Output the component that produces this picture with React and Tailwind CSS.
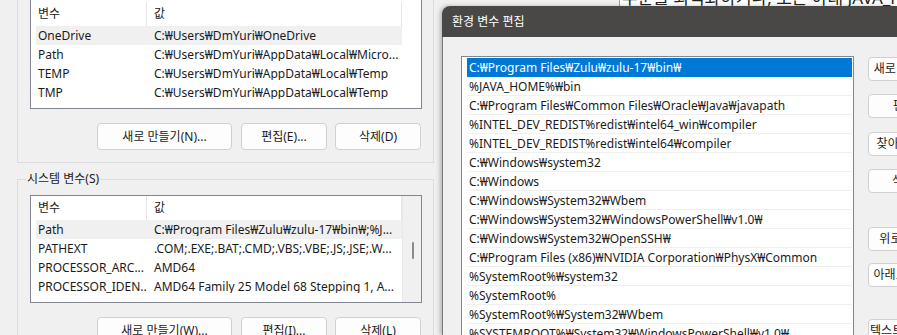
const userRows = [
  ['OneDrive', 'C:₩Users₩DmYuri₩OneDrive'],
  ['Path', 'C:₩Users₩DmYuri₩AppData₩Local₩Micro...'],
  ['TEMP', 'C:₩Users₩DmYuri₩AppData₩Local₩Temp'],
  ['TMP', 'C:₩Users₩DmYuri₩AppData₩Local₩Temp'],
];

const systemRows = [
  ['Path', 'C:₩Program Files₩Zulu₩zulu-17₩bin₩;%J...'],
  ['PATHEXT', '.COM;.EXE;.BAT;.CMD;.VBS;.VBE;.JS;.JSE;.W...'],
  ['PROCESSOR_ARC...', 'AMD64'],
  ['PROCESSOR_IDEN...', 'AMD64 Family 25 Model 68 Stepping 1, A...'],
];

const pathEntries = [
  'C:₩Program Files₩Zulu₩zulu-17₩bin₩',
  '%JAVA_HOME%₩bin',
  'C:₩Program Files₩Common Files₩Oracle₩Java₩javapath',
  '%INTEL_DEV_REDIST%redist₩intel64_win₩compiler',
  '%INTEL_DEV_REDIST%redist₩intel64₩compiler',
  'C:₩Windows₩system32',
  'C:₩Windows',
  'C:₩Windows₩System32₩Wbem',
  'C:₩Windows₩System32₩WindowsPowerShell₩v1.0₩',
  'C:₩Windows₩System32₩OpenSSH₩',
  'C:₩Program Files (x86)₩NVIDIA Corporation₩PhysX₩Common',
  '%SystemRoot%₩system32',
  '%SystemRoot%',
  '%SystemRoot%₩System32₩Wbem',
  '%SYSTEMROOT%₩System32₩WindowsPowerShell₩v1.0₩',
];

const sideButtons = [
  { label: '새로 만들기(N)', gap: 'mt-[1px]' },
  { label: '편집(E)', gap: 'mt-[13px]' },
  { label: '찾아보기(B)...', gap: 'mt-[14px]' },
  { label: '삭제(D)', gap: 'mt-[13px]' },
  { label: '위로 이동(U)', gap: 'mt-[34px]' },
  { label: '아래로 이동(O)', gap: 'mt-[12px]' },
  { label: '텍스트 편집(T)...', gap: 'mt-[32px]' },
];

const WinButton = ({ children, className = '' }) => (
  <div
    className={`flex items-center justify-center rounded-[4px] border border-[#d0d0d0] bg-[#fdfdfd] whitespace-nowrap text-[#1b1b1b] ${className}`}
  >
    {children}
  </div>
);

const VarList = ({ rows, scroll, header }) => (
  <div className={`flex ml-[12px] w-[392px] h-[108px] border-x border-b border-[#828790] bg-white ${header}`}>
    <div className="w-[371px] pl-[5px] flex flex-col">
      <div className={`flex ${scroll ? 'h-[24px]' : 'h-[26px] pt-[2px]'} items-center`}>
        <div className="w-[111px] h-full pl-[2px] flex items-center border-r border-[#e5e5e5]">변수</div>
        <div className="flex-1 h-full pl-[7px] flex items-center border-r border-[#e5e5e5]">값</div>
      </div>
      {rows.map(([name, value], i) => (
        <div key={name + i} className={`flex h-[19px] items-center ${i === 0 ? 'bg-[#f0f0f0]' : ''}`}>
          <div className="w-[111px] pl-[2px] whitespace-nowrap overflow-hidden">{name}</div>
          <div className="flex-1 pl-[7px] whitespace-nowrap overflow-hidden">{value}</div>
        </div>
      ))}
    </div>
    <div className={`flex-1 relative ${scroll ? 'bg-[#f0f0f0] border-l border-[#e8e8e8]' : ''}`}>
      {scroll && <div className="absolute left-[9px] top-[46px] w-[2px] h-[17px] bg-[#8a8a8a] rounded-full" />}
    </div>
  </div>
);

const ButtonRow = ({ labels }) => (
  <div className="flex ml-[79px] mt-[14px]">
    <WinButton className="w-[135px] h-[27px]">{labels[0]}</WinButton>
    <WinButton className="w-[86px] h-[27px] ml-[9px]">{labels[1]}</WinButton>
    <WinButton className="w-[86px] h-[27px] ml-[8px]">{labels[2]}</WinButton>
  </div>
);

export default function App() {
  return (
    <div className="w-[897px] h-[335px] overflow-hidden flex bg-[#f0f0f0] text-[12px] leading-none text-[#1b1b1b] font-['Noto_Sans','Noto_Sans_CJK_KR',sans-serif]">
      {/* 환경 변수 창 (뒤) */}
      <div className="w-[442px] shrink-0 flex flex-col">
        <div className="ml-[17px] w-[417px] h-[163px] shrink-0 border-x border-b border-[#dcdcdc]">
          <VarList rows={userRows} header="h-[109px]" />
          <ButtonRow labels={['새로 만들기(N)...', '편집(E)...', '삭제(D)']} />
        </div>

        <div className="ml-[17px] mt-[16px] w-[417px] flex-1 border-x border-t border-[#dcdcdc]">
          <div className="ml-[8px] -mt-[10px] w-fit bg-[#f0f0f0] px-[1px] leading-[18px]">시스템 변수(S)</div>
          <div className="mt-[7px]">
            <VarList rows={systemRows} scroll header="border-t" />
          </div>
          <ButtonRow labels={['새로 만들기(W)...', '편집(I)...', '삭제(L)']} />
        </div>
      </div>

      {/* 환경 변수 편집 대화 상자 */}
      <div className="flex-1 min-w-0 flex flex-col">
        <div className="h-[6px] shrink-0 flex">
          <div className="w-[178px] border-r border-[#a0a0a0]" />
          <div className="flex-1 bg-white overflow-hidden">
            <p className="-mt-[12px] pl-[2px] whitespace-nowrap text-[17px] leading-[20px] text-[#222]">
              부분을 최적화하거나, 또는 아래 JAVA_HOME 변수를
            </p>
          </div>
        </div>

        <div className="flex-1 flex flex-col rounded-tl-[8px] overflow-hidden shadow-[-2px_0_4px_rgba(0,0,0,0.25)]">
          <div className="h-[31px] shrink-0 bg-[#4a4846] text-white flex items-center pl-[10px]">환경 변수 편집</div>
          <div className="flex-1 flex bg-[#f0f0f0] border-l border-[#7a7a7a] pl-[18px] pt-[19px]">
            <div className="w-[393px] shrink-0 border border-[#828790] bg-white pl-[5px] pr-[1px] pt-[1px] self-start">
              {pathEntries.map((p, i) => (
                <div
                  key={p}
                  className={`h-[19px] pl-[2px] pt-[2px] flex items-center whitespace-nowrap border-b ${
                    i === 0 ? 'bg-[#0078d7] text-white border-[#0078d7]' : 'border-[#f0f0f0]'
                  }`}
                >
                  {p}
                </div>
              ))}
            </div>
            <div className="ml-[14px] flex flex-col">
              {sideButtons.map((b) => (
                <WinButton key={b.label} className={`w-[86px] h-[24px] shrink-0 ${b.gap}`}>
                  {b.label}
                </WinButton>
              ))}
            </div>
          </div>
        </div>
      </div>
    </div>
  );
}
